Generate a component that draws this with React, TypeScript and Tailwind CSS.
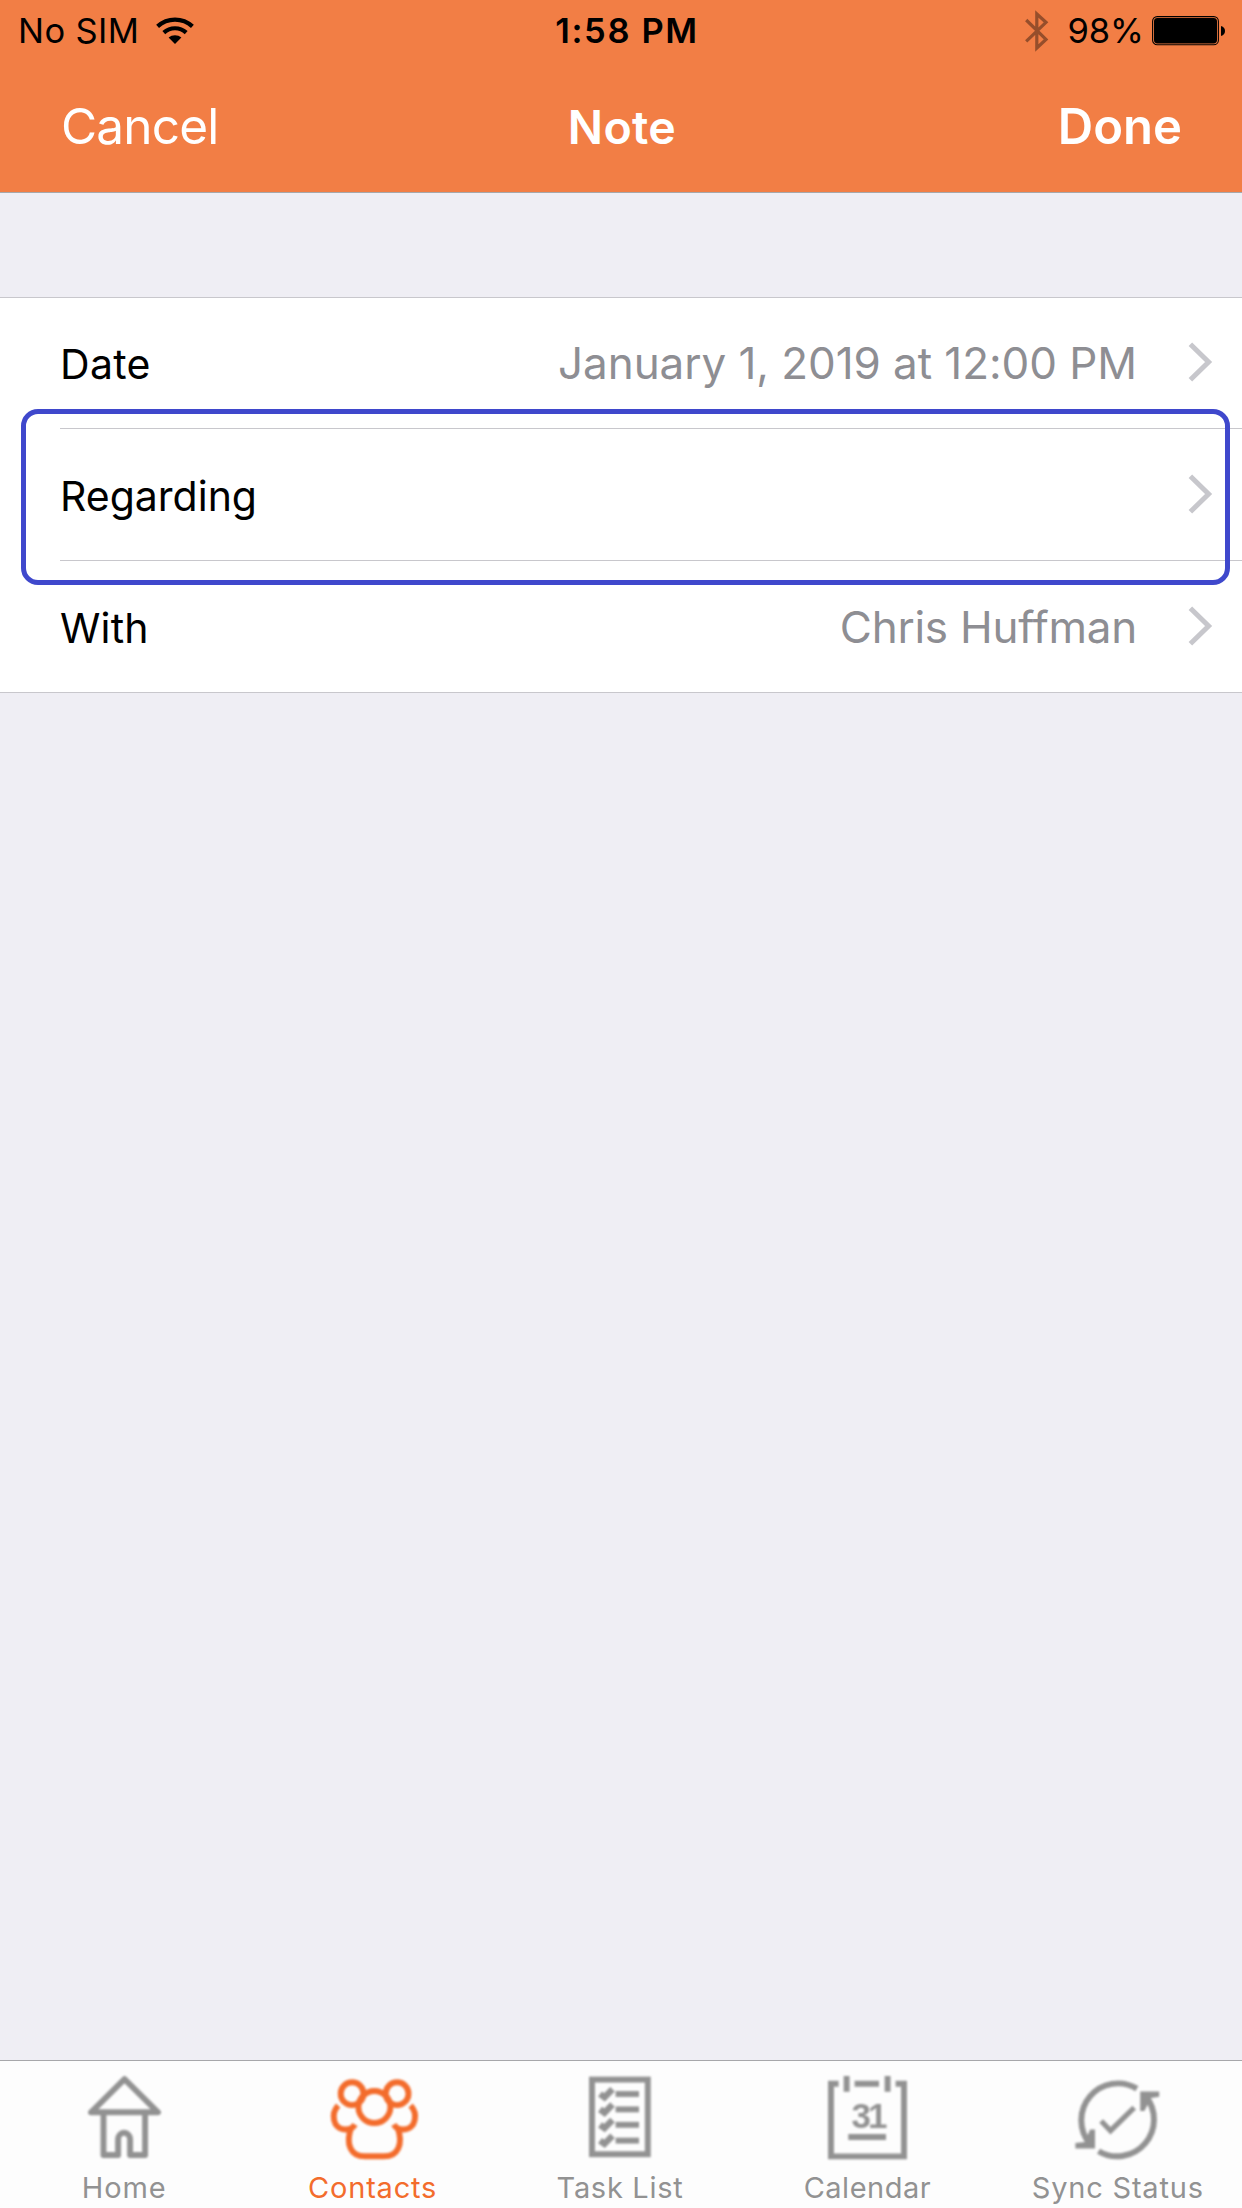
import type { ReactNode } from "react";

const Wifi = () => (
  <svg className="ml-[17px] h-[28px] w-[38px]" viewBox="0 0 38 28">
    <g fill="none" stroke="#000" strokeWidth="4.2">
      <path d="M1.6 9.4A25.6 25.6 0 0 1 36.4 9.4" />
      <path d="M7.8 15.6A16.6 16.6 0 0 1 30.2 15.6" />
    </g>
    <path d="M12.6 20.6A9.6 9.6 0 0 1 25.4 20.6L19 27Z" />
  </svg>
);

const Bluetooth = () => (
  <svg className="h-[42px] w-[24px]" viewBox="0 0 24 42">
    <path
      d="M1.2 10L21 29.4L11.8 38V4L21 12.4L1.2 31.4"
      fill="none"
      stroke="#964e2b"
      strokeWidth="3.2"
    />
  </svg>
);

const Battery = () => (
  <svg className="ml-[8px] h-[30px] w-[74px]" viewBox="0 0 74 30">
    <rect x="0.6" y="0.6" width="65.8" height="28.2" rx="4.6" fill="none" stroke="#000" strokeWidth="1.1" />
    <rect x="2" y="2" width="63" height="25.4" rx="3.4" />
    <path d="M69 10C71.8 11 73 12.6 73 15S71.8 19 69 20Z" />
  </svg>
);

const Chevron = () => (
  <svg className="mr-[29px] mb-[3px] ml-[51px] h-[40px] w-[25px]" viewBox="0 0 25 40">
    <path d="M2.4 2.3L20.6 20L2.4 37.7" fill="none" stroke="#c7c7cc" strokeWidth="5" />
  </svg>
);

const Row = ({ label, className, labelClass, value, valueClass }: {
  label: string;
  className: string;
  labelClass: string;
  value?: string;
  valueClass?: string;
}) => (
  <div className={`ml-[60px] flex items-center ${className}`}>
    <span className={`pt-[2px] text-[41px] text-black ${labelClass}`}>{label}</span>
    <span className={`ml-auto pb-px text-[44px] text-[#8e8e93] ${valueClass ?? ""}`}>{value}</span>
    <Chevron />
  </div>
);

const Tab = ({ label, labelClass, active, children }: {
  label: string;
  labelClass: string;
  active?: boolean;
  children: ReactNode;
}) => (
  <div className={`flex flex-col items-center pt-[9px] ${active ? "text-[#f36c2c]" : "text-[#929292]"}`}>
    <svg
      className="h-[92px] w-[100px] blur-[0.8px]"
      viewBox="0 0 100 92"
      fill="none"
      stroke="currentColor"
      strokeWidth="5.9"
    >
      {children}
    </svg>
    <span className={`mt-[11px] text-[29px] leading-[30px] ${labelClass}`}>{label}</span>
  </div>
);

const App = () => {
  return (
    <div className="flex h-[2208px] w-[1242px] flex-col bg-[#efeef4] font-['Inter',sans-serif] leading-none whitespace-nowrap">
      <header className="h-[193px] border-b border-[#a7a7aa] bg-[#f27e45]">
        <div className="grid h-[62px] grid-cols-[1fr_auto_1fr] items-center text-[34.5px] text-black">
          <div className="flex items-center pl-[18px]">
            <span className="pt-px tracking-[0.4px]">No SIM</span>
            <Wifi />
          </div>
          <span className="pt-px pl-[12px] font-semibold tracking-[1.6px]">1:58 PM</span>
          <div className="flex items-center justify-end pr-[16px]">
            <Bluetooth />
            <span className="ml-[18px] pt-px">98%</span>
            <Battery />
          </div>
        </div>
        <nav className="grid h-[130px] grid-cols-[1fr_auto_1fr] items-center text-white">
          <span className="pb-px pl-[61px] text-[49.5px] tracking-[-0.8px]">Cancel</span>
          <span className="pl-[2px] text-[46.5px] font-semibold tracking-[0.3px]">Note</span>
          <span className="pr-[60px] pb-[2px] text-right text-[49px] font-semibold">Done</span>
        </nav>
      </header>

      <main className="flex-1 pt-[104px]">
        <div className="relative border-y border-[#c8c7cc] bg-white">
          <Row
            label="Date"
            className="h-[131px] border-b border-[#c8c7cc]"
            labelClass="tracking-[0.3px]"
            value="January 1, 2019 at 12:00 PM"
            valueClass="tracking-[-0.06px]"
          />
          <Row
            label="Regarding"
            className="h-[132px] border-b border-[#c8c7cc] pt-[2px]"
            labelClass=""
          />
          <Row
            label="With"
            className="h-[131px] pt-[2px]"
            labelClass="tracking-[0.2px]"
            value="Chris Huffman"
            valueClass="tracking-[-0.25px]"
          />
          <div className="absolute top-[111px] left-[21px] h-[176px] w-[1209px] rounded-[17px] border-[5px] border-[#3f48cc]" />
        </div>
      </main>

      <footer className="grid h-[148px] grid-cols-5 border-t border-[#a7a7aa] bg-[#fdfdfd]">
        <Tab label="Home" labelClass="tracking-[0.9px]">
          <path d="M50.5 9.2L84 42.3H17Z" strokeLinejoin="round" />
          <path d="M29.5 42V85H44.1V69.3A6 6.5 0 0 1 56.1 69.3V85H71.1V42" strokeLinejoin="round" />
        </Tab>
        <Tab label="Contacts" labelClass="tracking-[0.8px]" active>
          <circle cx="29.1" cy="23.7" r="11.4" />
          <circle cx="74.1" cy="23.7" r="11.4" />
          <circle cx="51.4" cy="37" r="16" />
          <path d="M15.2 35.5C8 43 9 59.5 23 59.5Q29 59.5 32 54.5" />
          <path d="M87.6 35.5C94.8 43 93.8 59.5 79.8 59.5Q73.8 59.5 70.8 54.5" />
          <path d="M28 58C22.5 74 27.5 86.3 42 86.3H60.8C75.3 86.3 80.3 74 74.8 58" />
        </Tab>
        <Tab label="Task List" labelClass="pr-[2px] tracking-[0.7px]">
          <rect x="21" y="9.6" width="55.8" height="74.6" />
          {[24, 39.4, 54.8, 70.6].map((y) => (
            <g key={y} transform={`translate(0 ${y})`}>
              <path d="M44.6 0H68" />
              <path d="M29 0L33.5 3.3L41.5 -4.8" strokeWidth="6.4" />
            </g>
          ))}
        </Tab>
        <Tab label="Calendar" labelClass="pr-[4px] tracking-[0.5px]">
          <path d="M19.6 13.7H12V86.4H85V13.7H76.6" />
          <path d="M27.6 6V21.8M68.6 6V21.8M35.6 13.7H60M29.3 67H67" />
          <text
            x="32.4"
            y="58.2"
            fill="currentColor"
            stroke="none"
            className="font-['Liberation_Sans',sans-serif] text-[35px] font-bold tracking-[-2.8px]"
          >
            31
          </text>
        </Tab>
        <Tab label="Sync Status" labelClass="tracking-[0.8px]">
          <path d="M68.9 18.6A36.8 36.8 0 0 0 22 74" />
          <path d="M30.5 81.2A36.8 36.8 0 0 0 77.5 26" />
          <path d="M33.2 51L42.5 60.7L66.2 37.7" strokeWidth="5.2" />
          <g fill="currentColor" stroke="none">
            <path d="M72.2 21.4H91.2V26.8L83 28L76.4 41H72.2Z" />
            <path d="M27 78.4H7.4V73L17 72L22 59.4H27Z" />
          </g>
        </Tab>
      </footer>
    </div>
  );
};

export default App;
